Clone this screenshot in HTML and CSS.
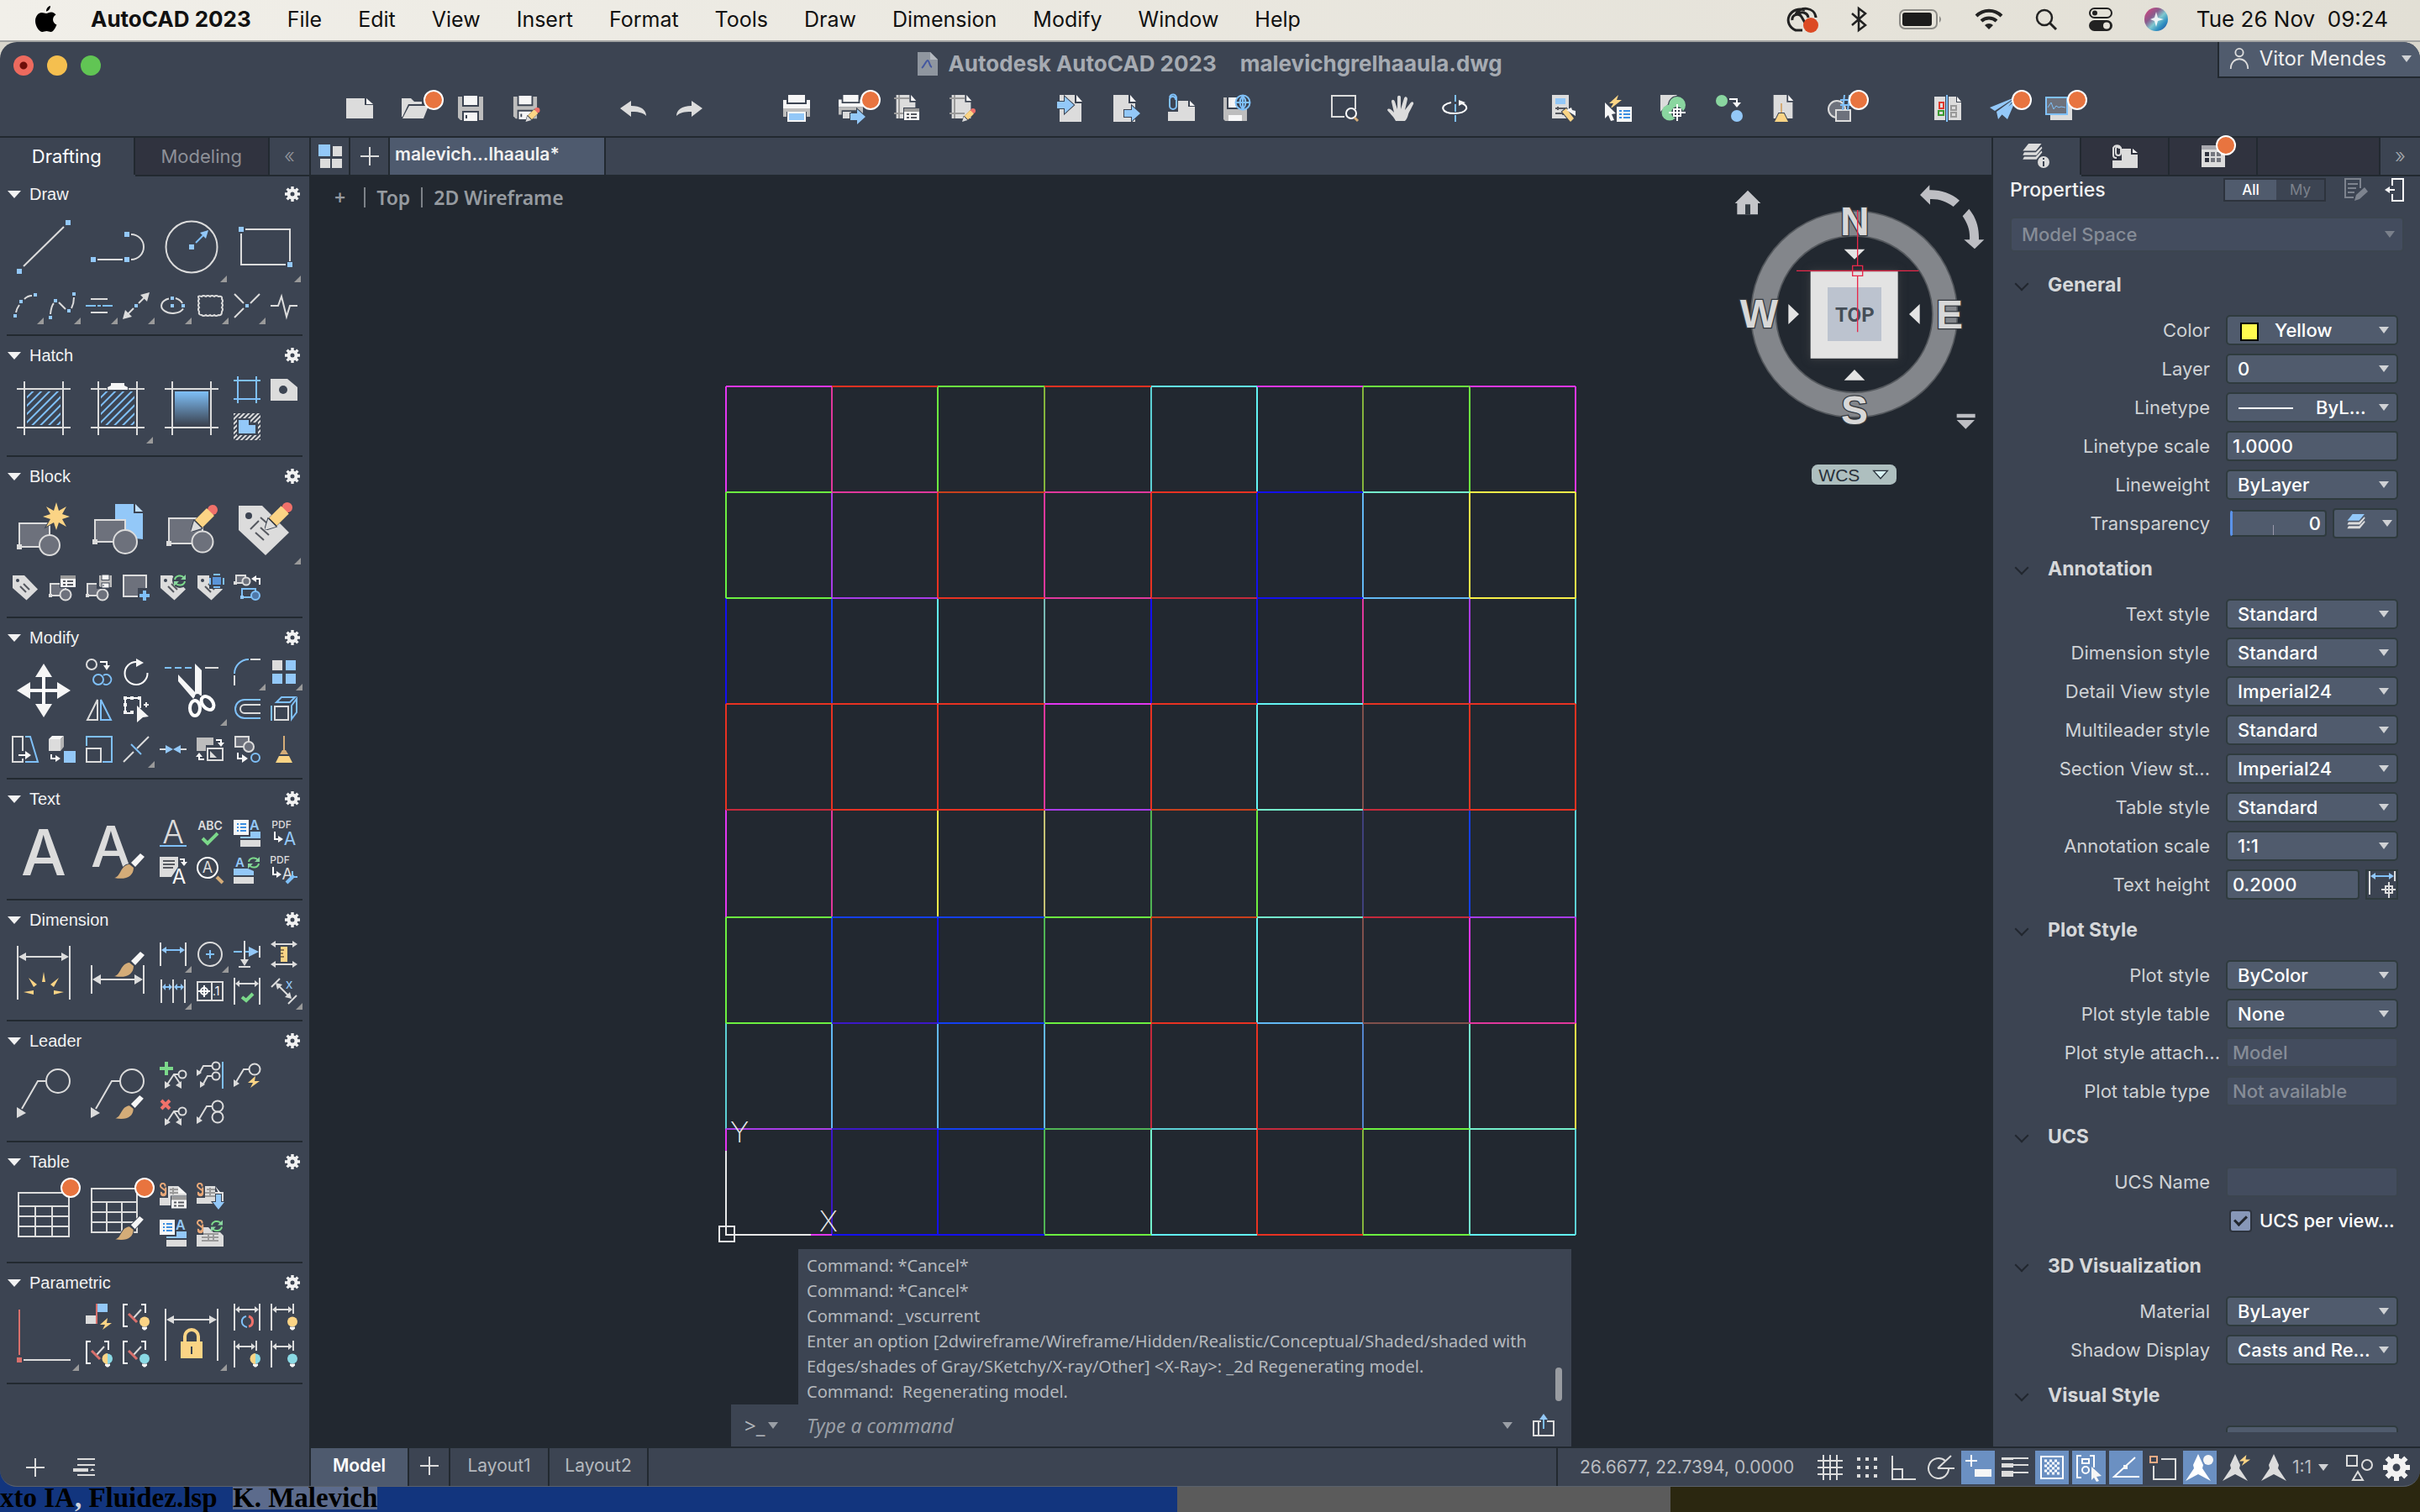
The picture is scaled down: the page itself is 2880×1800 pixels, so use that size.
FILE: index.html
```html
<!DOCTYPE html>
<html lang="en">
<head>
<meta charset="utf-8">
<title>Autodesk AutoCAD 2023 - malevichgrelhaaula.dwg</title>
<link rel="stylesheet" href="styles.css">
</head>
<body>

<!-- Shared icon parts -->
<svg class="defs" aria-hidden="true">
  <defs>
    <pattern id="hatchBlue" width="7" height="7" patternUnits="userSpaceOnUse" patternTransform="rotate(45)"><path class="b" d="M1 0V7"/></pattern>
    <pattern id="hatchLight" width="4" height="4" patternUnits="userSpaceOnUse" patternTransform="rotate(45)"><path class="l" d="M1 0V4"/></pattern>
    <linearGradient id="fade" x1="0" y1="0" x2="0" y2="1"><stop offset="0" stop-color="#7fc0f8"/><stop offset="1" stop-color="#3c4452"/></linearGradient>
    <linearGradient id="siri" x1="0" y1="0" x2="1" y2="1"><stop offset="0" stop-color="#e0407c"/><stop offset=".35" stop-color="#8a5a8c"/><stop offset=".55" stop-color="#7fc8d0"/><stop offset=".75" stop-color="#2f8fc0"/><stop offset="1" stop-color="#2a3d9a"/></linearGradient>
  </defs>
  <symbol id="gear" viewBox="0 0 18 18"><circle cx="9" cy="9" r="4.5" fill="none" stroke="#f2f2f2" stroke-width="4"/><path stroke="#f2f2f2" stroke-width="3.4" d="M9 0v4M9 14v4M0 9h4M14 9h4M2.6 2.6l3 3M12.4 12.4l3 3M15.4 2.6l-3 3M5.6 12.4l-3 3"/></symbol>
  <symbol id="pencil" viewBox="0 0 32 32"><path class="out" d="M5 19 20 4l8 8L13 27z"/><circle class="rf" cx="26" cy="6" r="6"/><path class="yf" d="M5 18 19 4l9 9L14 27z"/><path class="lf out" d="M0 32 4 19l9 9z"/></symbol>
  <symbol id="brush" viewBox="0 0 36 32"><path class="out wf" d="M20 11 31 0l5 4-11 12z"/><path class="out tf" d="M0 29C8 28 7 14 18 13l5 4C23 27 14 32 0 29z"/></symbol>
  <symbol id="tag" viewBox="0 0 32 32"><path class="lf" d="M1 1h14l16 16.500-13.500 13L1 16z"/><circle class="pf" cx="7" cy="7" r="2"/><path class="d" d="M10 14l7 7M14 11l7 7"/></symbol>
  <symbol id="sblk" viewBox="0 0 32 32"><path class="l g" d="M2 11h18v14H2z"/><circle class="l g" cx="20" cy="24" r="6.500"/><path class="lf" d="M0 23h4v4H0z"/></symbol>
  <symbol id="prop" viewBox="0 0 20 16"><path class="out wf" d="M1 1h18v14H1z"/><path fill="#9a9a9a" d="M1 1h18v4H1z"/><path class="d" d="M4 8h3M4 12h3M9 8h7M9 12h7"/></symbol>
  <symbol id="spin" viewBox="0 0 16 14"><path class="gr" d="M2 6a6 5.500 0 0 1 11-2M14 8a6 5.500 0 0 1-11 2"/><path class="grf" d="M15 0v6H9zM1 14V8h6z"/></symbol>
  <symbol id="bulb" viewBox="0 0 12 16"><circle cx="6" cy="6" r="6"/><path class="wf" d="M3 12h6v2l-2 2H5l-2-2z"/></symbol>
  <symbol id="bolt" viewBox="0 0 16 14"><path class="yf" d="M10 0 1 8h6l-3 6 11-8H9z"/></symbol>
  <symbol id="clip" viewBox="0 0 10 18"><path fill="none" stroke="#e8a878" stroke-width="2.200" d="M7 4a3 3 0 1 0-5 1l5 4a3 3 0 1 1-5 2M2 13a3 3 0 0 0 6 0V5"/></symbol>
  <symbol id="page" viewBox="0 0 32 32"><path class="lf" d="M3 0h18v10h8v22H3z"/><path class="wf" d="M23 0l7 8h-7z"/></symbol>
  <symbol id="floppy" viewBox="0 0 32 32"><path fill="#bdbdbd" d="M1 2h30v28H4l-3-3z"/><path class="pf" d="M6 0h20v14H6z"/><path class="wf" d="M8 1h16v11H8z"/><path class="pf" d="M6 19h20v12H6z"/><path class="wf" d="M8 21h16v10H8z"/><path class="pf" d="M10 24h2v4h-2z"/></symbol>
  <symbol id="printer" viewBox="0 0 32 32"><path class="wf" d="M6 0h20v9H6zM0 6h4v5h24V6h4v10H0z"/><path fill="#bdbdbd" d="M0 16h32v10h-4v-6H4v6H0z"/></symbol>
  <symbol id="person" viewBox="0 0 24 28"><circle class="l" cx="12" cy="6" r="5"/><path class="l" d="M1 27C1 10 23 10 23 27"/></symbol>
  <symbol id="stack" viewBox="0 0 32 28"><path class="top" d="M8 0h18l-8 10H0z"/><path class="lf" d="M2 12h16l8-8 1 2-8 10H0zM2 18h16l8-8 1 2-8 10H0z"/></symbol>
  <symbol id="alink" viewBox="0 0 32 32"><path class="wf" d="M0 0h18v18H0z"/><path stroke="#3c8ee0" stroke-width="2" d="M4 5h2M4 9h2M4 13h2M8 5h7M8 9h7M8 13h7"/><text class="bf" x="19" y="12" font-size="16" font-weight="600">A</text><path class="bf" d="M20 14h12v8H8v-2h12z"/><path class="lf" d="M8 24h24v8H8z"/></symbol>
  <symbol id="compass" viewBox="0 0 32 32"><path class="lf" d="M16 0l6 13-1 4 10 15-15-8-15 8 10-15-1-4z"/></symbol>
</svg>

<header class="menubar">
  <svg class="apple" width="26" height="32" viewBox="0 0 26 32"><path d="M18 0c0 3-2 6-5 6.500 0-3 2-6 5-6.500zM13 9c2 0 3-1.500 6-1.500 2.500 0 4.500 1.500 5.500 3-5 3-4.500 9.500 1 12C24 26 21.500 31 18.500 31c-2 0-3-1-5-1s-3.500 1-5 1C4.500 31 0 24 0 18c0-6 4-10 7.500-10 2.500 0 4 1 5.500 1z"/></svg>
  <nav class="menus">
    <button class="app">AutoCAD 2023</button><button>File</button><button>Edit</button><button>View</button><button>Insert</button><button>Format</button><button>Tools</button><button>Draw</button><button>Dimension</button><button>Modify</button><button>Window</button><button>Help</button>
  </nav>
  <div class="tray">
    <svg width="40" height="32" viewBox="0 0 40 32"><path fill="none" stroke="#222" stroke-width="3" d="M24 5a11 10 0 1 0-11 24h8M16 10a7 7 0 0 1 12 4M9 17a6 6 0 0 1 11-4l4 7M13 10C18 0 36 1 37 14"/><circle cx="31" cy="23" r="9" fill="#dc4a24"/></svg>
    <svg width="20" height="28" viewBox="0 0 20 28"><path fill="none" stroke="#222" stroke-width="2.500" d="M2 7l16 14-8 6V1l8 6L2 21"/></svg>
    <svg width="52" height="24" viewBox="0 0 52 24"><rect x="1" y="1" width="44" height="22" rx="6" fill="none" stroke="#8b8a86" stroke-width="2"/><rect x="4" y="4" width="35" height="16" rx="3" fill="#1c1c1c"/><path fill="#8b8a86" d="M48 8q4 4 0 8z"/></svg>
    <svg width="34" height="26" viewBox="0 0 34 26"><path fill="none" stroke="#222" stroke-width="4" d="M2 9a21 21 0 0 1 30 0M8 15a13 13 0 0 1 18 0"/><path fill="#222" d="M17 25l-5-5a7 7 0 0 1 10 0z"/></svg>
    <svg width="26" height="26" viewBox="0 0 26 26"><circle cx="11" cy="11" r="9" fill="none" stroke="#222" stroke-width="2.500"/><path stroke="#222" stroke-width="3" d="M17 17l8 8"/></svg>
    <svg width="28" height="28" viewBox="0 0 28 28"><rect x="1" y="1" width="26" height="11" rx="5.500" fill="none" stroke="#222" stroke-width="2"/><circle cx="7" cy="6.500" r="3" fill="#222"/><rect y="15" width="28" height="13" rx="6.500" fill="#222"/><circle cx="21" cy="21.500" r="4" fill="#e6e3da"/></svg>
    <svg width="28" height="28" viewBox="0 0 28 28"><circle cx="14" cy="14" r="14" fill="url(#siri)"/><path fill="#fff" opacity=".85" d="M14 5l2 7 7 2-7 2-2 7-2-7-5-2 5-2z"/></svg>
    <time>Tue 26 Nov&nbsp; 09:24</time>
  </div>
</header>

<main class="window">
  <header class="titlebar">
    <div class="title-row">
      <div class="lights"><i class="close"></i><i class="mini"></i><i class="zoom"></i></div>
      <h1><svg width="24" height="28" viewBox="0 0 24 28"><path fill="#8f969f" d="M0 0h15l9 9v19H0z"/><path fill="#b4b9c0" d="M15 0l9 9h-9z"/><path fill="none" stroke="#4458a0" stroke-width="2" d="M5 19c3-2 5-9 7-9s2 7 5 8"/></svg><span>Autodesk AutoCAD 2023</span><span>malevichgrelhaaula.dwg</span></h1>
      <button class="user"><svg width="24" height="26"><use href="#person"/></svg>Vitor Mendes<i class="caret"></i></button>
    </div>
    <div class="toolbar">
      <div class="group">
        <button aria-label="New"><svg viewBox="0 0 32 32"><path class="lf" d="M0 4h22v8h10v16H0z"/><path class="wf" d="M24 4l8 7h-8z"/></svg></button>
        <button aria-label="Open" class="new"><svg viewBox="0 0 32 32"><path class="lf" d="M0 4h11l4 4h9v3H8L1 26H0z"/><path class="lf" d="M9 13h23l-6 15H1z"/></svg></button>
        <button aria-label="Save"><svg><use href="#floppy"/></svg></button>
        <button aria-label="Save As"><svg viewBox="0 0 32 32"><use href="#floppy" width="30" height="30"/><use href="#pencil" x="15" y="15" width="18" height="17"/></svg></button>
      </div>
      <div class="group">
        <button aria-label="Undo"><svg viewBox="0 0 32 32"><path class="lf" d="M0 16l13-9v6c12 0 18 5 18 12-4-4-9-5-18-5v6z"/></svg></button>
        <button aria-label="Redo"><svg viewBox="0 0 32 32"><path class="lf" d="M32 16L19 7v6C7 13 1 18 1 25c4-4 9-5 18-5v6z"/></svg></button>
      </div>
      <div class="group">
        <button aria-label="Print"><svg viewBox="0 0 32 32"><use href="#printer"/><path class="wf" d="M5 20h22v12H5z"/><path class="bf" d="M7 22h18v8H7z"/></svg></button>
        <button aria-label="Batch publish" class="new"><svg viewBox="0 0 32 32"><use href="#printer" width="29" height="29"/><path class="lf" d="M5 20h10v8H5z"/><path class="bf out" d="M14 22h8v-5l10 9-10 9v-5h-8z"/></svg></button>
        <button aria-label="Page setup"><svg viewBox="0 0 32 32"><use href="#page" width="28" height="28"/><path class="m" d="M0 4h18M6 0v28M0 22h14"/><use href="#prop" x="11" y="14" width="20" height="18"/></svg></button>
        <button aria-label="Plot styles"><svg viewBox="0 0 32 32"><use href="#page" width="28" height="28"/><path class="m" d="M0 4h18M6 0v28M0 22h18"/><use href="#pencil" x="14" y="16" width="18" height="16"/></svg></button>
      </div>
      <div class="group">
        <button aria-label="Import"><svg viewBox="0 0 32 32"><use href="#page"/><path class="bf out" d="M0 8h9V2l11 10-11 10v-6H0z"/></svg></button>
        <button aria-label="Export"><svg viewBox="0 0 32 32"><use href="#page" x="-2"/><path class="bf out" d="M14 18h9v-5l10 9-10 9v-5h-9z"/></svg></button>
        <button aria-label="Attach"><svg viewBox="0 0 32 32"><path class="lf" d="M0 20h12V7h12v7h8v17H0z"/><path class="wf" d="M26 7l6 6h-6z"/><path class="b" d="M9 6a3.500 3.500 0 0 0-7-1v8a4 4 0 0 0 8 0V4a4 4 0 0 0-8-1"/></svg></button>
        <button aria-label="Save to web"><svg viewBox="0 0 32 32"><path fill="#bdbdbd" d="M0 3h4v14h24v14H2l-2-2z"/><path class="wf" d="M6 3h10v12H6zM6 24h16v7H6z"/><circle class="b pbg" cx="23" cy="9" r="8.500"/><path class="b" d="M23 1v16M15 9h16M23 1q-7 8 0 16M23 1q7 8 0 16"/></svg></button>
      </div>
      <div class="group">
        <button aria-label="Zoom window"><svg viewBox="0 0 32 32"><path class="l" d="M16 26H1V1h28v16"/><circle class="w" cx="24" cy="22" r="6"/><path stroke="#d4ac78" stroke-width="3" d="M28 27l4 4"/></svg></button>
        <button aria-label="Pan"><svg viewBox="0 0 32 32"><path class="lf" d="M11 31C8 25 3 21 1 18c1-3 5-1 8 3L6 8c0-3 3-3 4 0l3 9V3c0-3 4-3 4 0v14l4-13c1-3 4-2 4 1l-3 13 7-9c2-2 4 0 3 2-3 6-5 9-6 12-1 4-2 6-4 8z"/></svg></button>
        <button aria-label="Orbit"><svg viewBox="0 0 32 32"><path class="b" d="M16 0v8M16 24v8M16 11v9"/><path class="w" stroke-width="3" d="M11 9c-15 3-12 13 4 13 14 0 19-8 9-12"/><path class="wf" d="M20 13V6l8 3z"/></svg></button>
      </div>
      <div class="group">
        <button aria-label="Tool settings"><svg viewBox="0 0 32 32"><path class="lf" d="M3 0h20v28H3z"/><path class="bf" d="M7 4h12v7H7z"/><path class="d" d="M7 16h12M7 22h12M10 14v4M16 20v4"/><path class="yf out" d="M15 20l5-4 9 12-4 4z"/><path class="wf" d="M20 18l6-3 1 3 4 1v6z"/></svg></button>
        <button aria-label="Quick select"><svg viewBox="0 0 32 32"><path class="yf" d="M16 0L5 10h5L6 17l14-11h-6z"/><path class="wf out" d="M0 9l13 13-5 1 3 7-4 1-3-7-4 4z"/><path class="wf" d="M14 14h18v18H14z"/><path stroke="#3c8ee0" stroke-width="2" d="M17 19h3M17 23h3M17 27h3M22 19h8M22 23h8M22 27h8"/></svg></button>
        <button aria-label="Geolocation"><svg viewBox="0 0 32 32"><path class="lf" d="M0 0h20L0 20z"/><circle class="grf out" cx="20" cy="12" r="10"/><circle class="grf" cx="11" cy="21" r="9.500"/><circle class="pf" cx="20" cy="21" r="7"/><path class="w" d="M20 11v20M10 21h20M16 17h8v8h-8z"/></svg></button>
        <button aria-label="Match"><svg viewBox="0 0 32 32"><circle class="grf" cx="7" cy="7" r="7"/><circle class="bf" cx="25" cy="25" r="7"/><path class="w" d="M16 5h9v6"/><path class="wf" d="M20 9h10l-5 6z"/></svg></button>
        <button aria-label="Purge"><svg viewBox="0 0 32 32"><use href="#page" width="28" height="28"/><path stroke="#d4ac78" stroke-width="2" d="M12 10v12"/><path class="yf out" d="M9 22h6l5 10H4z"/></svg></button>
        <button aria-label="Count" class="new"><svg viewBox="0 0 32 32"><circle class="l g" cx="12" cy="17" r="10"/><path class="l g" d="M11 18h17v13H11z"/><path class="b" d="M21 0l-2 18M27 0l-2 18M16 6h14M16 12h14"/></svg></button>
      </div>
      <div class="group">
        <button aria-label="Compare"><svg viewBox="0 0 32 32"><path class="lf" d="M0 2h13v28H0zM17 2h9v7h6v21H17z"/><path class="wf" d="M27 2l5 6h-5z"/><path class="b" d="M15 0v32"/><path fill="none" stroke="#e03a2e" stroke-width="2" d="M6 9h5v7H6z"/><path fill="none" stroke="#3b9a32" stroke-width="2" d="M5 19h6v5H5z"/><path class="m" d="M20 13h6v5h-6zM20 21h6v5h-6z"/></svg></button>
        <button aria-label="Share" class="new"><svg viewBox="0 0 32 32"><path class="bf" d="M32 2L0 15l6 4zM30 4L8 20l2 9zM31 6L13 22l8 7z"/></svg></button>
        <button aria-label="Insights" class="new"><svg viewBox="0 0 32 32"><path class="lf" d="M6 6h26v24H6z"/><path class="b g" d="M1 3h25v20H1z"/><path class="b thin" d="M3 15l4-6 3 8 3-4 3 2 3-1 5 1"/></svg></button>
      </div>
    </div>
  </header>

  <div class="workspace">
    <aside class="palette">
      <nav class="tabs"><button class="active">Drafting</button><button>Modeling</button><button class="fold">«</button></nav>

      <section>
        <h2><i></i>Draw<svg><use href="#gear"/></svg></h2>
        <div class="tools">
          <button class="big" aria-label="Line"><svg viewBox="0 0 64 64"><path class="l" d="M8 55L56 8"/><path class="bf" d="M0 58h6v6H0zM58 0h6v6h-6z"/></svg></button>
          <button class="big" aria-label="Polyline"><svg viewBox="0 0 64 64"><path class="l" d="M8 47h30M48 17a15 15 0 0 1 0 30"/><path class="bf" d="M0 44h6v6H0zM40 44h6v6h-6zM40 14h6v6h-6z"/></svg></button>
          <button class="big fly" aria-label="Circle"><svg viewBox="0 0 64 64"><circle class="l" cx="32" cy="32" r="30.500"/><path class="b" d="M37 27l10-10"/><path class="bf" d="M29 29h6v6h-6zM52 12l-3 10-7-7z"/></svg></button>
          <button class="big fly" aria-label="Rectangle"><svg viewBox="0 0 64 64"><path class="l" d="M8 11h53v38M56 53H3V16"/><path class="bf" d="M0 8h6v6H0zM58 50h6v6h-6z"/></svg></button>
          <button class="low fly" aria-label="Arc"><svg viewBox="0 0 32 32"><path class="l" d="M5 24q1-5 4-9M15 8q4-4 9-4"/><path class="bf" d="M2 26h4v4H2zM9 9h4v4H9zM26 1h4v4h-4z"/></svg></button>
          <button class="low fly" aria-label="Spline"><svg viewBox="0 0 32 32"><path class="l" d="M2 26q1-10 4-13M12 12l8 8M27 19q3-6 3-13"/><path class="bf" d="M0 28h4v4H0zM6 8h4v4H6zM22 20h4v4h-4zM28 0h4v4h-4z"/></svg></button>
          <button class="low fly" aria-label="Multiline"><svg viewBox="0 0 32 32"><path class="l" d="M6 8h20M6 24h20"/><path class="b" d="M0 16h12M14 16h4M20 16h12"/></svg></button>
          <button class="low fly" aria-label="Construction line"><svg viewBox="0 0 32 32"><path class="l" d="M5 27l8-8M19 13l8-8"/><path class="lf" d="M32 0l-3 11-8-8zM0 32l3-11 8 8z"/><path class="bf" d="M14 14h4v4h-4z"/></svg></button>
          <button class="low fly" aria-label="Ellipse"><svg viewBox="0 0 32 32"><path class="l" d="M11 7.500a13.500 9 0 1 0 17 12M19 7q6 2 8 6"/><path class="bf" d="M13 5h4v4h-4zM13 14h4v4h-4zM26 14h4v4h-4z"/></svg></button>
          <button class="low fly" aria-label="Revision cloud"><svg viewBox="0 0 32 32"><path class="l" d="M3 8q-3-5 3-3 2-2 5 0 2-2 5 0 2-2 5 0 2-2 5 0 5-1 4 3 2 2 0 5 2 2 0 5 2 2 0 5 0 5-4 4-3 2-5 0-3 2-5 0-3 2-5 0-3 2-5 0-4 0-3-4-2-3 0-5-2-3 0-5-2-3 0-5z"/></svg></button>
          <button class="low fly" aria-label="Point"><svg viewBox="0 0 32 32"><path class="l" d="M1 2l11 11M31 2L20 13M12 19L1 30"/><path class="bf" d="M14 14h4v4h-4z"/></svg></button>
          <button class="low" aria-label="Break line"><svg viewBox="0 0 32 32"><path class="l" d="M0 16h9l4-11 6 24 4-13h9"/></svg></button>
        </div>
      </section>

      <section>
        <h2><i></i>Hatch<svg><use href="#gear"/></svg></h2>
        <div class="tools">
          <button class="big" aria-label="Hatch"><svg viewBox="0 0 64 64"><path class="l" d="M0 9h64M0 55h64M9 0v64M55 0v64"/><path fill="url(#hatchBlue)" d="M12 12h40v40H12z"/></svg></button>
          <button class="big fly" aria-label="Edit hatch"><svg viewBox="0 0 64 64"><path class="l" d="M0 9h64M0 55h64M9 0v64M55 0v64"/><path fill="url(#hatchBlue)" d="M12 12h40v40H12z"/><path class="wf out" d="M24 2h16v3l4 2v3H20V7l4-2z"/></svg></button>
          <button class="big" aria-label="Gradient"><svg viewBox="0 0 64 64"><path class="l" d="M0 9h64M0 55h64M9 0v64M55 0v64"/><path fill="url(#fade)" d="M12 12h40v40H12z"/></svg></button>
          <button aria-label="Boundary"><svg viewBox="0 0 32 32"><path class="b" d="M0 5h32M0 27h32M5 0v32M27 0v32"/></svg></button>
          <button aria-label="Wipeout"><svg viewBox="0 0 32 32"><path class="lf" d="M0 3h20l12 10v16H0z"/><circle class="pf" cx="15" cy="16" r="5"/></svg></button>
          <button aria-label="Region"><svg viewBox="0 0 32 32"><path fill="url(#hatchLight)" d="M0 0h32v32H0z"/><path class="pf" d="M4 6h16v5h9v15H4z"/><path class="bf" d="M6 8h12v6h8v10H6z"/></svg></button>
        </div>
      </section>

      <section>
        <h2><i></i>Block<svg><use href="#gear"/></svg></h2>
        <div class="tools">
          <button class="big" aria-label="Create block"><svg viewBox="0 0 64 64"><path class="l g" d="M3 25h36v28H3z"/><circle class="l g" cx="39" cy="51" r="12"/><path class="lf" d="M0 50h6v6H0z"/><path class="yf out" d="M47 0l3 10 9-5-5 9 9 3-9 3 5 9-9-5-3 9-3-9-9 5 5-9-9-3 9-3-5-9 9 5z"/></svg></button>
          <button class="big" aria-label="Insert block"><svg viewBox="0 0 64 64"><path class="bf" d="M29 2h22v11h11v31L29 40z"/><path fill="#c3e0fa" d="M53 2l9 9h-9z"/><path class="l g" d="M5 21h36v26H5z"/><circle class="l g" cx="41" cy="47" r="14"/><path class="lf" d="M2 44h6v6H2z"/></svg></button>
          <button class="big" aria-label="Edit block"><svg viewBox="0 0 64 64"><path class="l g" d="M5 19h40v30H5z"/><circle class="l g" cx="45" cy="47" r="12.500"/><path class="lf" d="M2 46h6v6H2z"/><use href="#pencil" x="31" y="3" width="32" height="32"/></svg></button>
          <button class="big fly" aria-label="Edit attributes"><svg viewBox="0 0 64 64"><path class="lf" d="M0 4h28l32 32-28 27L0 33z"/><circle class="pf" cx="12" cy="16" r="4"/><path class="d" d="M14 32l10-10M20 36l10 9M26 30l10 9M26 18l8 7"/><use href="#pencil" x="31" y="0" width="33" height="33"/></svg></button>
          <button class="low" aria-label="Define attributes"><svg><use href="#tag"/></svg></button>
          <button class="low" aria-label="Manage attributes"><svg viewBox="0 0 32 32"><use href="#sblk"/><use href="#prop" x="13" y="0" width="20" height="16"/></svg></button>
          <button class="low" aria-label="Write block"><svg viewBox="0 0 32 32"><use href="#sblk"/><path class="pf" d="M13 0h19v17H13z"/><use href="#floppy" x="15" y="0" width="17" height="16"/></svg></button>
          <button class="low" aria-label="Base point"><svg viewBox="0 0 32 32"><path class="l g" d="M1 1h27v25H1z"/><path class="pf" d="M18 16h14v16H18z"/><path stroke="#7fc0f8" stroke-width="4" d="M26 19v12M20 25h12"/></svg></button>
          <button class="low" aria-label="Synchronize"><svg viewBox="0 0 32 32"><use href="#tag"/><circle class="pf" cx="24" cy="7" r="9"/><use href="#spin" x="16" y="0" width="16" height="14"/></svg></button>
          <button class="low" aria-label="Retain display"><svg viewBox="0 0 32 32"><use href="#tag"/><path class="pf" d="M15 0h17v17H15z"/><path fill="#5a94d8" d="M19 3h10v9H19z"/><path class="b" d="M16 4v8M32 4v8M20 0h8M20 15h8"/></svg></button>
          <button class="low" aria-label="Replace block"><svg viewBox="0 0 32 32"><path class="l g" d="M3 1h11v9H3z"/><circle class="l g" cx="15" cy="8" r="4.500"/><path class="lf" d="M0 8h4v4H0z"/><path class="b" fill-opacity="0" d="M10 17h16v10H10z"/><circle cx="26" cy="25" r="5" fill="#4f78a8" stroke="#7fc0f8" stroke-width="2"/><path class="bf" d="M8 25h4v4H8z"/><path class="w" d="M31 12V5h-6"/><path class="wf" d="M21 5l6-4v8z"/></svg></button>
        </div>
      </section>

      <section>
        <h2><i></i>Modify<svg><use href="#gear"/></svg></h2>
        <div class="tools">
          <button class="big" aria-label="Move"><svg viewBox="0 0 64 64"><path stroke="#fff" stroke-width="4" d="M32 10v44M10 32h44"/><path class="wf" d="M32 0l10 16H22zM32 64l10-16H22zM0 32l16-10v20zM64 32L48 22v20z"/></svg></button>
          <button aria-label="Copy"><svg viewBox="0 0 32 32"><circle class="l" cx="7" cy="7" r="6"/><circle class="b" cx="15" cy="25" r="6"/><path class="b" d="M21 20a6 6 0 1 1 0 10"/><path class="w" d="M17 4h8v6"/><path class="wf" d="M21 8h8l-4 6z"/></svg></button>
          <button aria-label="Rotate"><svg viewBox="0 0 32 32"><path class="w" d="M16 4a13.500 13.500 0 1 0 13.500 13"/><path class="wf" d="M16 0l9 5-9 5z"/></svg></button>
          <button class="big mid fly" aria-label="Trim"><svg viewBox="0 0 64 64"><path class="b" d="M0 5h8M12 5h8M24 5h8"/><path class="l" d="M48 5h16"/><path class="wf" d="M36 0l8 8v30h-8zM16 13l22 23-4 6-18-21z"/><ellipse cx="36" cy="53" rx="6" ry="9" fill="none" stroke="#fff" stroke-width="4"/><ellipse cx="51" cy="47" rx="6" ry="9" transform="rotate(-40 51 47)" fill="none" stroke="#fff" stroke-width="4"/><circle class="pf" cx="39" cy="39" r="3"/></svg></button>
          <button class="fly" aria-label="Fillet"><svg viewBox="0 0 32 32"><path class="l" d="M1 20v12M20 1h12"/><path class="b" d="M1 18A17 17 0 0 1 18 1"/></svg></button>
          <button class="fly" aria-label="Array"><svg viewBox="0 0 32 32"><path class="lf" d="M2 2h12v12H2z"/><path class="bf" d="M18 2h12v12H18zM2 18h12v12H2zM18 18h12v12H18z"/></svg></button>
          <button aria-label="Mirror"><svg viewBox="0 0 32 32"><path class="l" d="M14 5v24H2z"/><path class="b" d="M18 5v24h12z"/></svg></button>
          <button aria-label="Select similar"><svg viewBox="0 0 32 32"><path class="w" d="M3 3h18v12M3 3v18h10"/><path class="wf" d="M1 1h4v4H1zM9 1h4v4H9zM18 1h4v4h-4zM1 9h4v4H1zM1 18h4v4H1zM9 18h4v4H9zM17 12l14 13-7 1-7 6zM27 8h2v6h-2zM25 10h6v2h-6z"/></svg></button>
          <button aria-label="Offset"><svg viewBox="0 0 32 32"><path class="b" d="M32 5H13a11 11 0 0 0 0 22h19"/><path class="l" d="M32 11H13a5 5 0 0 0 0 10h19"/></svg></button>
          <button aria-label="Presspull"><svg viewBox="0 0 32 32"><path class="l" stroke-width="3" d="M5 13h16v16H5z"/><path class="b" d="M1 12v18M7 8l6-6h16l-6 6zM25 28V12l6-8v16z"/></svg></button>
          <button class="low" aria-label="Stretch"><svg viewBox="0 0 32 32"><path class="l" d="M13 18V1H1v30h12v-4"/><path class="b" d="M16 1h6l9 30H16"/><path class="w" d="M8 23h10"/><path class="wf" d="M16 18l7 5-7 5z"/></svg></button>
          <button class="low" aria-label="Change space"><svg viewBox="0 0 32 32"><path class="lf" d="M0 4h14v14H0z"/><path class="wf" d="M0 4l4-4h14l-4 4z"/><path fill="#b4b4b4" d="M14 4l4-4v13l-4 5z"/><path class="bf" d="M18 18h14v14H18z"/><path class="w" d="M3 22v5h6"/><path class="wf" d="M8 23l6 4-6 4z"/></svg></button>
          <button class="low" aria-label="Scale"><svg viewBox="0 0 32 32"><path class="b" d="M1 12V1h30v30H20"/><path class="l" d="M1 15h17v16H1z"/></svg></button>
          <button class="low fly" aria-label="Break"><svg viewBox="0 0 32 32"><path class="l" d="M1 31l12-12M17 15L31 1"/><path class="b" stroke-width="3" d="M10 10l12 12"/></svg></button>
          <button class="low" aria-label="Join"><svg viewBox="0 0 32 32"><path class="l" d="M0 16h8M24 16h8"/><path class="bf" d="M7 11l9 5-9 5zM25 11l-9 5 9 5z"/></svg></button>
          <button class="low" aria-label="Draw order"><svg viewBox="0 0 32 32"><path fill="#bdbdbd" d="M0 2h20v9h-9v7H0z"/><path class="l" d="M13 15h18v14H13z"/><path class="lf" d="M16 18v8h8z"/><path class="w" d="M23 5h6v4M3 23v5h6"/><path class="wf" d="M25 8h8l-4 5zM-1 25h8l-4-5z"/></svg></button>
          <button class="low" aria-label="Explode"><svg viewBox="0 0 32 32"><path class="l g" d="M2 1h16v12H2z"/><circle class="l g" cx="18" cy="13" r="6"/><circle class="b" cx="26" cy="26" r="5"/><path class="w" d="M5 20v7h6"/><path class="wf" d="M10 22l7 5-7 5z"/></svg></button>
          <button class="low" aria-label="Cleanup"><svg viewBox="0 0 32 32"><path stroke="#d4ac78" stroke-width="2" d="M16 0v20"/><path class="tf" d="M14 17h4l3 5H11z"/><path class="yf" d="M10 24h12l4 8H6z"/></svg></button>
        </div>
      </section>

      <section>
        <h2><i></i>Text<svg><use href="#gear"/></svg></h2>
        <div class="tools">
          <button class="big" aria-label="Multiline text"><svg viewBox="0 0 64 64"><text class="lf" x="32" y="60" font-size="76" font-weight="500" text-anchor="middle">A</text></svg></button>
          <button class="big" aria-label="Text style"><svg viewBox="0 0 64 64"><text class="lf" x="24" y="50" font-size="68" font-weight="500" text-anchor="middle">A</text><use href="#brush" x="28" y="34" width="36" height="32"/></svg></button>
          <button aria-label="Single line text"><svg viewBox="0 0 32 32"><text class="lf" x="16" y="28" font-size="38" font-weight="300" text-anchor="middle">A</text><path class="b" d="M0 31h32"/></svg></button>
          <button aria-label="Spelling"><svg viewBox="0 0 32 32"><text class="lf" x="16" y="12" font-size="14" font-weight="600" text-anchor="middle">ABC</text><path fill="none" stroke="#7bd88a" stroke-width="4" d="M7 22l6 6 12-12"/></svg></button>
          <button aria-label="Insert field"><svg><use href="#alink"/></svg></button>
          <button aria-label="PDF text"><svg viewBox="0 0 32 32"><text class="lf" x="13" y="10" font-size="12" font-weight="500" text-anchor="middle">PDF</text><path class="w" d="M5 14v9h6"/><path class="wf" d="M9 19l6 4-6 4z"/><text class="bf" x="23" y="30" font-size="21" text-anchor="middle">A</text></svg></button>
          <button aria-label="Text from file"><svg viewBox="0 0 32 32"><path class="lf" d="M0 0h22v12l-8 12H0z"/><path class="d" d="M4 5h14M4 9h14M4 13h12"/><text class="wf" x="23" y="32" font-size="24" text-anchor="middle">A</text><path class="w" d="M24 3h5v4"/><path class="wf" d="M25 6h8l-4 5z"/></svg></button>
          <button aria-label="Find text"><svg viewBox="0 0 32 32"><circle class="w" cx="13" cy="13" r="12"/><text class="lf" x="13" y="19" font-size="18" text-anchor="middle">A</text><path stroke="#d4ac78" stroke-width="4" d="M24 24l7 7"/></svg></button>
          <button aria-label="Update fields"><svg viewBox="0 0 32 32"><text class="bf" x="2" y="12" font-size="15" font-weight="600">A</text><path class="bf" d="M0 14h17l7 3v5H0z"/><path class="lf" d="M0 24h24v8H0z"/><use href="#spin" x="16" y="0" width="16" height="14"/></svg></button>
          <button aria-label="PDF recognition"><svg viewBox="0 0 32 32"><text class="lf" x="11" y="8" font-size="12" font-weight="500" text-anchor="middle">PDF</text><path class="w" d="M3 12v9h6"/><path class="wf" d="M7 17l6 4-6 4z"/><text class="lf" x="20" y="27" font-size="19" text-anchor="middle">A</text><path stroke="#7fc0f8" stroke-width="4" d="M19 31l8-8"/><path class="b" stroke-width="3" d="M26 17v5l2 2h4"/></svg></button>
        </div>
      </section>

      <section>
        <h2><i></i>Dimension<svg><use href="#gear"/></svg></h2>
        <div class="tools">
          <button class="big" aria-label="Dimension"><svg viewBox="0 0 64 64"><path class="l" d="M1 0v64M63 0v64M8 13h48"/><path class="lf" d="M2 13l9-5v10zM62 13l-9-5v10z"/><path class="yf" d="M30 43l2-12 2 12zM20 49l-6-11 10 8zM44 49l6-11-10 8zM20 53L8 55l12 3zM44 53l12 2-12 3z"/></svg></button>
          <button class="big" aria-label="Dimension style"><svg viewBox="0 0 64 64"><path class="l" d="M1 23v34M63 23v34M8 40h48"/><path class="lf" d="M2 40l10-6v12zM62 40l-10-6v12z"/><use href="#brush" x="28" y="7" width="36" height="32"/></svg></button>
          <button class="fly" aria-label="Linear"><svg viewBox="0 0 32 32"><path class="l" d="M1 2v28M31 2v28"/><path class="b" d="M6 11h20"/><path class="bf" d="M2 11l6-4v8zM30 11l-6-4v8z"/></svg></button>
          <button class="fly" aria-label="Center mark"><svg viewBox="0 0 32 32"><circle class="l" cx="16" cy="16" r="14"/><path class="b" d="M16 11v10M11 16h10"/></svg></button>
          <button aria-label="Ordinate"><svg viewBox="0 0 32 32"><path class="b" d="M0 13h10M14 13h6"/><path class="l" d="M13 0v24M6 31h14M31 6v14"/><path class="bf" d="M18 7l12 6-12 6z"/><path class="lf" d="M8 22h10l-5 8z"/></svg></button>
          <button aria-label="Measure"><svg viewBox="0 0 32 32"><path class="l" d="M4 4h24M4 28h24"/><path class="lf" d="M0 4l6-4v8zM32 4l-6-4v8zM0 28l6-4v8zM32 28l-6-4v8z"/><path class="yf" d="M12 7h8v18h-8z"/><path stroke="#6b5a3c" stroke-width="1.500" d="M12 11h4M12 15h3M12 19h4"/></svg></button>
          <button class="fly" aria-label="Continue"><svg viewBox="0 0 32 32"><path class="l" d="M2 2v28M16 2v28M30 2v28"/><path class="b" d="M5 11h8M20 11h8"/><path class="bf" d="M3 11l4-4v8zM15 11l-4-4v8zM17 11l4-4v8zM29 11l-4-4v8z"/></svg></button>
          <button aria-label="Tolerance"><svg viewBox="0 0 32 32"><path class="l" d="M1 5h30v22H1zM18 5v22"/><circle class="w" cx="9" cy="16" r="4"/><path class="w" d="M9 9v14M2 16h14"/><text class="wf" x="19" y="21" font-size="14">.1</text></svg></button>
          <button aria-label="Inspect"><svg viewBox="0 0 32 32"><path class="l" d="M1 0v32M31 0v32M5 7h22"/><path class="lf" d="M2 7l5-4v8zM30 7l-5-4v8z"/><path fill="none" stroke="#7bd88a" stroke-width="4" d="M10 23l5 4 8-8"/></svg></button>
          <button class="fly" aria-label="Oblique"><svg viewBox="0 0 32 32"><path class="l" d="M1 11L11 1M21 31l10-10M9 9l13 13"/><path class="lf" d="M6 6l2 8 6-6zM25 25l-2-8-6 6z"/><text class="bf" x="22" y="13" font-size="16" text-anchor="middle">x</text></svg></button>
        </div>
      </section>

      <section>
        <h2><i></i>Leader<svg><use href="#gear"/></svg></h2>
        <div class="tools">
          <button class="big" aria-label="Multileader"><svg viewBox="0 5 64 64"><circle class="l" cx="49" cy="22" r="14"/><path class="l" d="M35 22H25L6 55"/><path class="lf" d="M0 66V53l11 7z"/></svg></button>
          <button class="big" aria-label="Leader style"><svg viewBox="0 5 64 64"><circle class="l" cx="49" cy="22" r="14"/><path class="l" d="M35 22H25L6 55"/><path class="lf" d="M0 66V53l11 7z"/><use href="#brush" x="28" y="39" width="36" height="30"/></svg></button>
          <button aria-label="Add leader"><svg viewBox="0 0 32 32"><path stroke="#7bd88a" stroke-width="4" d="M8 0v16M0 8h16"/><circle class="l" cx="27" cy="15" r="4.500"/><path class="l" d="M22 15h-5l-8 12M17 15l8 12"/><path class="lf" d="M6 32v-9l7 5zM26 32v-9l-7 5z"/></svg></button>
          <button aria-label="Align leaders"><svg viewBox="0 0 32 32"><path class="b" d="M31 0v32"/><circle class="l" cx="23" cy="5" r="4.500"/><circle class="l" cx="23" cy="17" r="4.500"/><path class="l" d="M18 5H8L3 14M18 17h-5L7 28"/><path class="lf" d="M0 17v-8l6 4zM4 31v-8l6 4z"/></svg></button>
          <button aria-label="Quick leader"><svg viewBox="0 0 32 32"><circle class="l" cx="25" cy="9" r="6.500"/><path class="l" d="M18 9h-6L3 24"/><path class="lf" d="M0 30v-9l7 5z"/><use href="#bolt" x="16" y="17" width="16" height="14"/></svg></button>
          <button class="rowstart" aria-label="Remove leader"><svg viewBox="0 0 32 32"><path stroke="#f0716a" stroke-width="4" d="M2 2l10 10M12 2L2 12"/><circle class="l" cx="27" cy="15" r="4.500"/><path class="l" d="M22 15h-5l-8 12M17 15l8 12"/><path class="lf" d="M6 32v-9l7 5zM26 32v-9l-7 5z"/></svg></button>
          <button aria-label="Collect leaders"><svg viewBox="0 0 32 32"><circle class="l" cx="25" cy="9" r="6.500"/><circle class="l" cx="25" cy="22" r="6.500"/><path class="l" d="M18 9h-6L3 24"/><path class="lf" d="M0 30v-9l7 5z"/></svg></button>
        </div>
      </section>

      <section>
        <h2><i></i>Table<svg><use href="#gear"/></svg></h2>
        <div class="tools">
          <button class="big new" aria-label="Table"><svg viewBox="0 4 64 64"><path class="l" d="M2 10h60v52H2zM2 26h60M2 38h60M2 50h60M22 26v36M42 26v36"/></svg></button>
          <button class="big new" aria-label="Table style"><svg viewBox="0 4 64 64"><path class="l" d="M1 5h54v52H1zM1 21h54M1 33h54M1 45h54M19 21v36M37 21v36"/><use href="#brush" x="28" y="38" width="36" height="30"/></svg></button>
          <button aria-label="Data link"><svg viewBox="0 0 32 32"><path class="lf" d="M0 18h10V4h12v9h10v14H0z"/><path class="wf" d="M22 4l10 9H22z"/><path class="m" d="M12 8h10M12 12h10M16 6v8"/><use href="#clip" width="9" height="18"/><use href="#prop" x="13" y="15" width="20" height="17"/></svg></button>
          <button aria-label="Download from source"><svg viewBox="0 0 32 32"><path class="lf" d="M0 18h10V4h12v7h10v14H0z"/><path class="wf" d="M22 4l10 12-6-4z"/><path class="m" d="M12 8h10M10 12h12M10 16h12M16 6v11"/><use href="#clip" width="9" height="18"/><path class="bf out" d="M23 14h6v9h4l-7 9-7-9h4z"/></svg></button>
          <button class="rowstart" aria-label="Table field"><svg><use href="#alink"/></svg></button>
          <button aria-label="Update links"><svg viewBox="0 0 32 32"><path class="lf" d="M0 18h8V9h6l6 6h8l4 4v13H0z"/><path class="m" d="M8 17h18M6 21h20M6 25h20M14 16v10M20 16v10"/><use href="#clip" width="9" height="18"/><use href="#spin" x="16" y="0" width="16" height="15"/></svg></button>
        </div>
      </section>

      <section>
        <h2><i></i>Parametric<svg><use href="#gear"/></svg></h2>
        <div class="tools">
          <button class="big fly" aria-label="Constraint"><svg viewBox="0 3 64 64"><path stroke="#d9706c" stroke-width="2" d="M3 4v54"/><path fill="#d9706c" d="M0 61h6v6H0z"/><path class="l" d="M8 64h56"/></svg></button>
          <button aria-label="Auto constrain"><svg viewBox="0 0 32 32"><path class="bf" d="M14 0h12v10H14z"/><path class="lf" d="M0 14h12v10H0z"/><path stroke="#d9706c" stroke-width="2" d="M13 0v24"/><use href="#bolt" x="16" y="17" width="16" height="14"/></svg></button>
          <button aria-label="Show constraints"><svg viewBox="0 0 32 32"><path class="w" d="M6 1H1v26h5M22 1h5v10"/><path class="l" d="M12 18l10-11"/><path stroke="#d9706c" stroke-width="3" d="M7 12l10 10"/><use href="#bulb" class="yf" x="20" y="15" width="12" height="17"/></svg></button>
          <button class="big mid fly" aria-label="Dimensional constraint"><svg viewBox="0 4 64 64"><path class="l" d="M1 4v62M63 4v62M8 17h48"/><path class="lf" d="M2 17l9-5v10zM62 17l-9-5v10z"/><path class="yf" d="M19 43h26v20H19z"/><path fill="none" stroke="#fbd485" stroke-width="4" d="M24 44v-7a8 8 0 0 1 16 0v7"/><path stroke="#3c4452" stroke-width="2" d="M32 49v9"/></svg></button>
          <button aria-label="Convert"><svg viewBox="0 0 32 32"><path class="l" d="M1 0v32M31 0v32M5 7h22"/><path class="lf" d="M2 7l5-4v8zM30 7l-5-4v8z"/><path class="b" stroke-width="3" d="M16 28c-8-2-8-11-1-13"/><path fill="none" stroke="#f0716a" stroke-width="3" d="M18 15c6 2 6 11 0 12"/></svg></button>
          <button aria-label="Show dynamic"><svg viewBox="0 0 32 32"><path class="l" d="M1 0v32M27 0v12M5 7h18"/><path class="lf" d="M2 7l5-4v8zM26 7l-5-4v8z"/><use href="#bulb" class="yf" x="20" y="15" width="12" height="17"/></svg></button>
          <button aria-label="Show or hide constraints"><svg viewBox="0 0 32 32"><path class="w" d="M6 1H1v26h5M22 1h5v10"/><path class="l" d="M12 18l10-11"/><path stroke="#d9706c" stroke-width="3" d="M7 12l10 10"/><use href="#bulb" class="cf" x="20" y="15" width="12" height="17"/><path class="yf" d="M26 15a6 6 0 0 0 0 13z"/></svg></button>
          <button aria-label="Hide constraints"><svg viewBox="0 0 32 32"><path class="w" d="M6 1H1v26h5M22 1h5v10"/><path class="l" d="M12 18l10-11"/><path stroke="#d9706c" stroke-width="3" d="M7 12l10 10"/><use href="#bulb" class="cf" x="20" y="15" width="12" height="17"/></svg></button>
          <button aria-label="Toggle dynamic"><svg viewBox="0 0 32 32"><path class="l" d="M1 0v32M27 0v12M5 7h18"/><path class="lf" d="M2 7l5-4v8zM26 7l-5-4v8z"/><use href="#bulb" class="cf" x="20" y="15" width="12" height="17"/><path class="yf" d="M26 15a6 6 0 0 0 0 13z"/></svg></button>
          <button aria-label="Hide dynamic"><svg viewBox="0 0 32 32"><path class="l" d="M1 0v32M27 0v12M5 7h18"/><path class="lf" d="M2 7l5-4v8zM26 7l-5-4v8z"/><use href="#bulb" class="cf" x="20" y="15" width="12" height="17"/></svg></button>
        </div>
      </section>

      <footer>
        <button aria-label="Add set"><svg width="22" height="22" viewBox="0 0 22 22"><path class="l" d="M11 0v22M0 11h22"/></svg></button>
        <button aria-label="Manage sets"><svg width="26" height="22" viewBox="0 0 26 22"><path class="l" d="M5 1h21M5 8h21M5 20h21"/><path class="lf" d="M0 12h18v4H0zM20 15l3-3 3 3z"/></svg></button>
      </footer>
    </aside>

    <div class="main">
      <div class="upper">
        <section class="editor">
          <nav class="filetabs">
            <button class="icon" aria-label="Start"><svg width="28" height="28" viewBox="0 0 28 28"><path class="bf" d="M0 0h14v14H0z"/><path class="lf" d="M17 2h11v12H17zM2 17h12v11H2zM16 17h12v11H16z"/></svg></button>
            <button class="icon" aria-label="New drawing"><svg width="22" height="22" viewBox="0 0 22 22"><path class="l" d="M11 0v22M0 11h22"/></svg></button>
            <button class="file">malevich...lhaaula*</button>
          </nav>
          <div class="canvas">
            <div class="viewlabel"><button>+</button><i></i><button>Top</button><i></i><button>2D Wireframe</button></div>

            <svg class="drawing" width="1017" height="1016" viewBox="0 0 1017 1016" aria-label="Drawing grid">
              <g id="grid"></g>
              <path class="ucs" d="M2 912v100h101M-6 1002h18v18h-18z"/>
              <text class="axis" x="18" y="902" text-anchor="middle">Y</text>
              <text class="axis" x="124" y="1008" text-anchor="middle">X</text>
            </svg>

            <svg class="cube" width="340" height="400" viewBox="0 0 1020 1200" aria-label="View cube">
              <path fill="#c4c5c9" d="M120 80l46 46h-10v40H82v-40H74z"/><path fill="#333a42" d="M111 130h18v36h-18z"/>
              <circle cx="500" cy="522" r="324" fill="none" stroke="#54585d" stroke-width="94"/><circle cx="500" cy="522" r="324" fill="none" stroke="#83868b" stroke-width="84"/>
              <g fill="#bdbec3"><path d="M735 96l34-35v18c40-1 75 10 107 37l-22 22c-28-20-50-28-83-27v20z"/><path d="M910 146c26 33 36 67 35 110h19l-34 33-38-33h20c2-30-5-54-25-84z"/><path d="M866 878h66v14h-66zM866 900h64l-32 32z"/></g>
              <g fill="#e4e4e4"><path d="M464 290h74l-37 36zM464 758h74l-37-38zM265 486v72l38-36zM734 486v72l-38-36z"/></g>
              <path class="face" d="M344 370h312v310H344z"/><path fill="#bcc3cf" d="M405 426h192v192H405z"/>
              <g class="nesw"><text x="502" y="241">N</text><text x="160" y="570">W</text><text x="840" y="574">E</text><text x="501" y="915">S</text></g>
              <text class="top-label" x="502" y="550">TOP</text>
              <path fill="none" stroke="#e8284a" stroke-width="4" d="M294 367h436M512 150v198M512 386v200M494 349h36v36h-36z"/>
              <rect x="348" y="1059" width="303" height="72" rx="22" fill="#aebfbf"/>
              <text class="wcs" x="373" y="1118">WCS</text><path fill="#d8f2f2" stroke="#28303a" stroke-width="4" d="M569 1081h50l-25 28z"/>
            </svg>

            <section class="command">
              <div class="history">
                <p>Command: *Cancel*</p><p>Command: *Cancel*</p><p>Command: _vscurrent</p>
                <p>Enter an option [2dwireframe/Wireframe/Hidden/Realistic/Conceptual/Shaded/shaded with</p>
                <p>Edges/shades of Gray/SKetchy/X-ray/Other] &lt;X-Ray&gt;: _2d Regenerating model.</p>
                <p>Command:&nbsp; Regenerating model.</p>
                <i class="scroll"></i>
              </div>
              <div class="prompt">
                <button class="recent" aria-label="Recent commands">&gt;_<i class="caret"></i></button>
                <input type="text" placeholder="Type a command" aria-label="Command">
                <i class="caret"></i>
                <button aria-label="Undock"><svg width="26" height="28" viewBox="0 0 26 28"><path class="l" d="M10 9H1v17h24V9h-8M7 9v17"/><path class="b" d="M13 5v13"/><path class="bf" d="M13 0l5 7H8z"/></svg></button>
              </div>
            </section>
          </div>
        </section>

        <aside class="props">
          <nav class="tabs">
            <button class="active" aria-label="Properties"><svg width="34" height="30" viewBox="0 0 34 30"><use href="#stack" class="lf" width="28" height="24"/><circle class="out lf" cx="25" cy="22" r="7"/><path stroke="#3c4452" stroke-width="2" d="M25 17v2M25 21v6"/></svg></button>
            <button aria-label="References"><svg width="32" height="30" viewBox="0 0 32 30"><path class="lf" d="M1 20h11V6h11v7h8v16H1z"/><path class="wf" d="M25 6l6 5h-6z"/><path class="l" d="M9 6a2 2 0 0 0-4 0v5a3 3 0 0 0 6 0V5a5 5 0 0 0-9 0v9q0 3 4 3"/></svg></button>
            <button aria-label="Tool palettes" class="new"><svg width="28" height="28" viewBox="0 0 28 28"><path class="lf" d="M0 1h28v26H0z"/><path fill="#a8a8ae" d="M0 1h28v5H0z"/><path fill="#2f323e" d="M4 9h5v5H4zM4 16h5v5H4z"/><path fill="#74767e" d="M11 9h5v5h-5zM18 9h5v5h-5zM11 16h5v5h-5zM18 16h5v5h-5z"/></svg></button>
            <span></span>
            <button class="fold">»</button>
          </nav>
          <div class="props-head">
            <h2>Properties</h2>
            <div class="seg"><button class="on">All</button><button>My</button></div>
            <button class="ico edit" aria-label="Edit list"><svg width="28" height="28" viewBox="0 0 28 28"><path fill="none" stroke="#7d838e" stroke-width="2" d="M11 23H1V1h18v11M4 7h12M4 12h10M4 17h8"/><path fill="#7d838e" d="M12 27l2-7 10-9 4 5-10 9z"/></svg></button>
            <button class="ico" aria-label="Collapse"><svg width="24" height="28" viewBox="0 0 24 28"><path class="w" d="M9 9V1h13v26H9v-8M3 14h9"/><path class="wf" d="M0 14l6-4v8z"/></svg></button>
          </div>
          <div class="combo off wide"><select disabled aria-label="Object"><option>Model Space</option></select></div>

          <form class="fields">
            <h3>General</h3>
            <div class="row"><label for="f1">Color</label><div class="combo swatch"><select id="f1"><option>Yellow</option></select></div></div>
            <div class="row"><label for="f2">Layer</label><div class="combo"><select id="f2"><option>0</option></select></div></div>
            <div class="row"><label for="f3">Linetype</label><div class="combo linetype"><select id="f3"><option>ByL...</option></select></div></div>
            <div class="row"><label for="f4">Linetype scale</label><input id="f4" type="text" value="1.0000"></div>
            <div class="row"><label for="f5">Lineweight</label><div class="combo"><select id="f5"><option>ByLayer</option></select></div></div>
            <div class="row"><label for="f6">Transparency</label><div class="pair"><input id="f6" class="num" type="text" value="0"><button type="button" class="bylayer" aria-label="Transparency source"><svg width="26" height="22"><use href="#stack" class="bf"/></svg><i class="caret"></i></button></div></div>
            <h3>Annotation</h3>
            <div class="row"><label for="f7">Text style</label><div class="combo"><select id="f7"><option>Standard</option></select></div></div>
            <div class="row"><label for="f8">Dimension style</label><div class="combo"><select id="f8"><option>Standard</option></select></div></div>
            <div class="row"><label for="f9">Detail View style</label><div class="combo"><select id="f9"><option>Imperial24</option></select></div></div>
            <div class="row"><label for="f10">Multileader style</label><div class="combo"><select id="f10"><option>Standard</option></select></div></div>
            <div class="row"><label for="f11">Section View st...</label><div class="combo"><select id="f11"><option>Imperial24</option></select></div></div>
            <div class="row"><label for="f12">Table style</label><div class="combo"><select id="f12"><option>Standard</option></select></div></div>
            <div class="row"><label for="f13">Annotation scale</label><div class="combo"><select id="f13"><option>1:1</option></select></div></div>
            <div class="row"><label for="f14">Text height</label><div class="pair"><input id="f14" type="text" value="0.2000"><button type="button" class="pick" aria-label="Pick height"><svg width="32" height="32" viewBox="0 0 32 32"><path class="l" d="M1 0v28M31 0v12"/><path class="b" d="M6 6h20"/><path class="bf" d="M2 6l6-4v8zM30 6l-6-4v8z"/><path class="l" d="M24 13v19M15 22h17M20 18h8v8h-8z"/></svg></button></div></div>
            <h3>Plot Style</h3>
            <div class="row"><label for="f15">Plot style</label><div class="combo"><select id="f15"><option>ByColor</option></select></div></div>
            <div class="row"><label for="f16">Plot style table</label><div class="combo"><select id="f16"><option>None</option></select></div></div>
            <div class="row"><label for="f17" class="cut">Plot style attach...</label><input id="f17" type="text" value="Model" disabled></div>
            <div class="row"><label for="f18">Plot table type</label><input id="f18" type="text" value="Not available" disabled></div>
            <h3>UCS</h3>
            <div class="row"><label for="f19">UCS Name</label><input id="f19" type="text" disabled></div>
            <div class="row"><span></span><label class="check"><input type="checkbox" checked>UCS per view...</label></div>
            <h3>3D Visualization</h3>
            <div class="row"><label for="f20">Material</label><div class="combo"><select id="f20"><option>ByLayer</option></select></div></div>
            <div class="row"><label for="f21">Shadow Display</label><div class="combo"><select id="f21"><option>Casts and Re...</option></select></div></div>
            <h3>Visual Style</h3>
            <div class="row"><label for="f22">Visual style</label><div class="combo"><select id="f22"><option>2D Wireframe</option></select></div></div>
          </form>
        </aside>
      </div>

      <footer class="statusbar">
        <nav class="layouts"><button class="active">Model</button><button class="add" aria-label="New layout"><svg width="22" height="22" viewBox="0 0 22 22"><path class="l" d="M11 0v22M0 11h22"/></svg></button><button>Layout1</button><button>Layout2</button></nav>
        <div class="status">
          <output>26.6677, 22.7394, 0.0000</output>
          <button aria-label="Grid"><svg viewBox="0 0 32 32"><path class="l" d="M8 1v30M16 1v30M24 1v30M1 8h30M1 16h30M1 24h30"/></svg></button>
          <button aria-label="Snap"><svg viewBox="0 0 32 32"><path class="lf" d="M4 4h4v4H4zM14 4h4v4h-4zM24 4h4v4h-4zM4 14h4v4H4zM14 14h4v4h-4zM24 14h4v4h-4zM4 24h4v4H4zM14 24h4v4h-4zM24 24h4v4h-4z"/></svg></button>
          <button aria-label="Ortho"><svg viewBox="0 0 32 32"><path class="l" d="M2 2v28h28M2 18h12v12"/></svg></button>
          <button aria-label="Polar"><svg viewBox="0 0 32 32"><path class="l" d="M21 8a12 12 0 1 0 4 8M12 17h20M12 17L28 2"/></svg></button>
          <button class="on" aria-label="Dynamic input"><svg viewBox="0 0 32 32"><path class="w" d="M8 1v14M1 8h14"/><path class="wf" d="M12 18h20v9H12z"/></svg></button>
          <button aria-label="Lineweight"><svg viewBox="0 0 32 32"><path class="l" d="M0 5h32M12 13h20M12 22h20"/><path class="lf" d="M0 4h14v3H0zM0 11h14v5H0zM0 20h14v7H0z"/></svg></button>
          <button class="on" aria-label="Transparency"><svg viewBox="0 0 32 32"><path class="w" d="M3 3h26v26H3z"/><path stroke="#fff" stroke-width="3" stroke-dasharray="3 3" d="M7 8h18M7 14h18M7 20h18M10 11h15M10 17h15M10 23h15"/></svg></button>
          <button class="on" aria-label="Selection cycling"><svg viewBox="0 0 32 32"><path class="w" d="M7 2H2v26h5M17 2h5v14M8 6h8v5H8z"/><circle class="w" cx="12" cy="19" r="4"/><path class="wf" d="M19 15l12 11-6 1 3 5-3 1-3-5-3 3z"/></svg></button>
          <button class="on" aria-label="Object snap tracking"><svg viewBox="0 0 32 32"><path class="w" d="M27 4L2 27h30"/><path class="wf" d="M13 13h5v5h-5z"/></svg></button>
          <button aria-label="Object snap"><svg viewBox="0 0 32 32"><path class="l" d="M14 6h17v24H5V14"/><path fill="none" stroke="#efab84" stroke-width="2" d="M1 3h8v7H1z"/></svg></button>
          <button class="on" aria-label="Annotation visibility"><svg class="white" viewBox="0 0 32 32"><use href="#compass" x="-2" width="32" height="32"/><ellipse class="wf" cx="26" cy="7" rx="6" ry="6"/></svg></button>
          <button aria-label="Auto annotation"><svg viewBox="0 0 32 32"><use href="#compass" x="-2" width="32" height="32"/><use href="#bolt" x="18" y="0" width="15" height="15"/></svg></button>
          <button aria-label="Annotation scale"><svg viewBox="0 0 32 32"><use href="#compass" width="32" height="32"/></svg></button>
          <button class="scale">1:1<i class="caret"></i></button>
          <button aria-label="Isolate"><svg viewBox="0 0 32 32"><path class="l" d="M1 2h12v12H1zM14 21l6 10H8z"/><circle class="l" cx="25" cy="13" r="6"/></svg></button>
          <button aria-label="Customization"><svg viewBox="0 0 32 32"><use href="#gear" width="32" height="32"/></svg></button>
        </div>
      </footer>
    </div>
  </div>
</main>

<div class="desktop"><span class="sel">xto IA<span class="comma">,</span> Fluidez.lsp</span><span class="name">K. Malevich</span></div>

<script src="drawing.js"></script>
</body>
</html>
```

FILE: styles.css
```css
:root {
  --panel: #3c4452;
  --line: #222930;
  --field: #505b6d;
  --light: #dcdcdc;
  --blue: #7fc0f8;
  --ui: Inter, "Liberation Sans", sans-serif;
}
* { box-sizing: border-box; }
body {
  margin: 0; height: 100vh; display: flex; flex-direction: column; overflow: hidden;
  font: 22px/28px var(--ui); color: var(--light);
  background: linear-gradient(90deg, #12357e 0 1401px, #5b5b5b 1401px 1988px, #2b2710 1988px) bottom / 100% 60px no-repeat #d9d6cc;
}
button, input, select { font: inherit; color: inherit; background: none; border: 0; padding: 0; margin: 0; }
h1, h2, h3, p { margin: 0; font-size: inherit; font-weight: inherit; }
svg { display: block; flex: none; overflow: visible; }
.defs { width: 0; height: 0; position: absolute; }

/* icon paints */
.l, .b, .w, .m, .d, .gr { fill: none; stroke-width: 2; }
.l { stroke: var(--light); } .b { stroke: var(--blue); } .w { stroke: #fff; }
.m { stroke: #9a9a9a; } .d { stroke: #55585f; } .gr { stroke: #7bd88a; }
.g { fill: #6d717c; } .thin { stroke-width: 1; }
.lf { fill: var(--light); } .bf { fill: #93c8f8; } .wf { fill: #f6f6f6; }
.yf { fill: #fbd485; } .rf { fill: #f0716a; } .tf { fill: #d4ac78; }
.cf { fill: #8ad9e4; } .pf { fill: var(--panel); } .grf { fill: #8ad6a0; }
.out { stroke: var(--panel); stroke-width: 2; paint-order: stroke; }
.pbg { fill: var(--panel); }
.caret { border: 6px solid transparent; border-top: 8px solid #cfd1d4; border-bottom: 0; }

/* system menu bar */
.menubar {
  flex: none; height: 50px; padding: 0 38px 2px 42px; display: flex; align-items: center;
  background: linear-gradient(90deg, #f1efe9, #e2dfd5); border-bottom: 2px solid #a3a4a3;
  color: #111; font-size: 25px;
}
.menus { display: flex; gap: 43px; margin-left: 40px; }
.menus .app { font-weight: 700; font-size: 26px; }
.tray { margin-left: auto; display: flex; align-items: center; gap: 38px; }
.tray time { margin-left: -4px; font-size: 26px; }

/* application window */
.window {
  flex: 1; min-height: 0; display: flex; flex-direction: column; overflow: hidden;
  background: var(--panel); border-radius: 20px; border-bottom: 1px solid #5a616c;
}
.titlebar { flex: none; border-bottom: 2px solid var(--line); }
.title-row { height: 52px; display: grid; grid-template-columns: 1fr auto 1fr; align-items: center; }
.lights { display: flex; gap: 16px; padding: 4px 0 0 16px; }
.lights i { width: 24px; height: 24px; border-radius: 50%; }
.close { background: radial-gradient(circle, #6e0f0a 0 4px, #ed6a5e 5px); }
.mini { background: #f5bf4f; }
.zoom { background: #61c554; }
h1 { display: flex; align-items: center; font-size: 26px; font-weight: 700; color: #a6abb2; }
h1 svg { margin-right: 12px; }
h1 span + span { margin-left: 28px; }
.user {
  justify-self: end; align-self: start; height: 43px; padding: 0 10px 2px 12px; display: flex; align-items: center; gap: 12px;
  background: var(--field); border: solid var(--line); border-width: 0 0 2px 2px; font-size: 24px; color: #eee;
}
.user .caret { margin-left: 6px; }
.toolbar { height: 60px; padding: 0 0 6px 395px; display: flex; align-items: center; gap: 62px; }
.group { display: flex; }
.group button { width: 66px; height: 44px; display: grid; place-items: center; position: relative; }
.group svg { width: 32px; height: 32px; }
.new { position: relative; }
.new::after {
  content: ""; position: absolute; top: 0; right: -1px; width: 20px; height: 20px;
  border-radius: 50%; background: #e8743f; border: 2px solid #fff;
}
.workspace { flex: 1; min-height: 0; display: flex; }

/* tool palette */
.palette { flex: none; width: 370px; display: flex; flex-direction: column; border-right: 2px solid var(--line); }
.tabs { flex: none; height: 44px; display: flex; }
.tabs > * { background: #30333f; border-right: 2px solid var(--line); box-shadow: 0 2px var(--line); display: grid; place-items: center; }
.tabs > .active { background: var(--panel); box-shadow: none; }
.tabs > .fold { background: var(--panel); width: 47px; flex: none; border: 0; color: #a0a4aa; font-size: 24px; font-weight: 300; }
.palette .tabs > * { flex: 1; color: #8d9097; }
.palette .tabs > .active { color: #fff; }
.palette .tabs > .fold { flex: none; }
.palette section { flex: none; margin: 0 8px; padding-bottom: 12px; border-bottom: 2px solid var(--line); }
.palette h2 { height: 42px; padding: 4px 3px 0 0; display: flex; align-items: center; font: 20px/24px "Liberation Sans", sans-serif; color: #f2f2f2; }
.palette h2 i { border: 8px solid transparent; border-top: 9px solid #f2f2f2; border-bottom: 0; margin: 0 10px 0 1px; }
.palette h2 svg { width: 18px; height: 18px; margin-left: auto; }
.tools { display: grid; grid-template-columns: repeat(8, 44px); grid-auto-rows: 44px; }
.tools button { position: relative; display: grid; place-items: center; }
.tools svg { width: 32px; height: 32px; }
.tools .big { grid-row: 1 / span 2; grid-column: span 2; }
.tools .mid { grid-column: 5 / span 2; }
.tools .big svg { width: 64px; height: 64px; }
.tools .low { top: 4px; }
.tools:has(.low) { padding-bottom: 4px; }
.tools .rowstart { grid-column: 5; }
.tools .fly::after { content: ""; position: absolute; right: 0; bottom: 0; border: 4px solid #9a9a9a; border-top-color: transparent; border-left-color: transparent; }
.tools .big.fly::after { right: 2px; bottom: 2px; }
.tools .new::after { top: 0; right: 0; }
.tools text { font-family: var(--ui); }
.palette footer { margin-top: auto; height: 44px; padding-left: 31px; display: flex; align-items: center; gap: 34px; }

/* drawing editor */
.main { flex: 1; min-width: 0; display: flex; flex-direction: column; }
.upper { flex: 1; min-height: 0; display: flex; }
.editor { flex: 1; min-width: 0; display: flex; flex-direction: column; border-right: 2px solid var(--line); }
.filetabs { flex: none; height: 46px; display: flex; border-bottom: 2px solid var(--line); }
.filetabs button { border-right: 2px solid var(--line); }
.filetabs .icon { width: 47px; display: grid; place-items: center; }
.filetabs .file { width: 257px; padding: 0 6px 4px; text-align: left; background: #4e5a6e; color: #f0f0f0; font-weight: 600; font-size: 21px; }
.canvas { flex: 1; min-height: 0; position: relative; display: grid; place-items: center; background: #222830; }
.viewlabel { position: absolute; left: 28px; top: 10px; display: flex; align-items: center; gap: 13px; color: #969ba0; font: 600 23px/30px "Noto Sans", sans-serif; }
.viewlabel i { width: 2px; height: 24px; background: #7d8288; }
.viewlabel button:first-child { margin-right: 9px; }
.ucs { fill: none; stroke: #e8e8e8; stroke-width: 2; }
.axis { font: 200 34px var(--ui); fill: #e8e8e8; }
.cube { position: absolute; top: -10px; right: -10px; }
.cube text { font-family: "Liberation Sans", sans-serif; }
.face { fill: #e3e3e3; filter: drop-shadow(0 0 16px #55555588); }
.nesw text { font-size: 144px; font-weight: 700; text-anchor: middle; fill: #d8d8d8; stroke: #33383e; stroke-width: 8; paint-order: stroke; }
.cube .top-label { font: 700 72px "Liberation Sans Narrow", Roboto, sans-serif; text-anchor: middle; fill: #454e58; }
.wcs { font-size: 63px; fill: #28303a; }
.command { position: absolute; bottom: 0; left: 50%; width: 1000px; margin-left: -500px; font: 20px/30px "Noto Sans", sans-serif; color: #b4b8bd; }
.history { position: relative; margin-left: 80px; padding: 5px 10px 0; height: 185px; background: var(--panel); white-space: nowrap; }
.scroll { position: absolute; right: 11px; bottom: 4px; width: 8px; height: 40px; border-radius: 4px; background: #999ca1; }
.prompt { height: 50px; display: flex; align-items: center; background: var(--panel); padding-right: 20px; }
.prompt input { flex: 1; font-style: italic; font-size: 23px; outline: 0; }
.prompt input::placeholder { color: #9a9fa6; opacity: 1; }
.prompt .caret { border-width: 8px 6px 0; border-top-color: #9a9fa6; margin-right: 24px; }
.prompt .recent { width: 90px; padding-left: 16px; display: flex; align-items: center; gap: 4px; font-size: 24px; }
.recent .caret { margin: 0; }

/* properties inspector */
.props { flex: none; width: 508px; display: flex; flex-direction: column; padding-bottom: 17px; }
.props .tabs > * { width: 105px; }
.props .tabs > span { flex: 1; width: auto; }
.props .tabs > .fold { width: 47px; }
.props .tabs .new::after { top: -3px; right: 24px; }
.props-head { flex: none; height: 36px; margin-bottom: 14px; padding: 0 18px 0 20px; display: flex; align-items: center; }
.props-head h2 { font-weight: 500; font-size: 23px; color: #f2f2f2; margin-right: auto; }
.seg { display: flex; height: 28px; border: 2px solid #2d333d; margin-right: 22px; }
.seg button { width: 57px; font-size: 17px; line-height: 22px; color: #7d828c; }
.seg .on { width: 61px; background: var(--field); color: #fff; font-weight: 500; }
.ico.edit { margin-right: 20px; }
.combo { position: relative; display: flex; border: 2px solid #2f3b3e; border-radius: 5px; background: var(--field); height: 36px; }
.combo select { appearance: none; flex: 1; min-width: 0; padding-left: 12px; color: #fff; font-weight: 500; font-size: 22px; opacity: 1; }
.combo::after { content: ""; position: absolute; right: 9px; top: 12px; border: 6px solid transparent; border-top: 8px solid #d0d2d5; border-bottom: 0; }
.combo.off { height: 42px; margin: 0 19px 0 20px; border-color: #3c454f; background: #434c5e; }
.combo.off select { color: #868c97; }
.combo.off::after { border-top-color: #7a808b; top: 15px; }
.swatch::before { content: ""; position: absolute; left: 15px; top: 7px; width: 18px; height: 18px; background: #fffa4f; border: 2px solid #000; }
.combo.swatch select { padding-left: 56px; }
.linetype::before { content: ""; position: absolute; left: 13px; top: 16px; width: 65px; height: 2px; background: #fff; }
.combo.linetype select { padding-left: 105px; }
.fields { flex: 1; min-height: 0; overflow: hidden; padding-top: 8px; }
.fields h3 { height: 62px; padding-left: 65px; display: flex; align-items: center; position: relative; font-weight: 700; color: #d6d8da; font-size: 23px; }
.fields h3::before { content: ""; position: absolute; left: 28px; top: 24px; width: 10px; height: 10px; border: solid #22272f; border-width: 0 2px 2px 0; transform: rotate(45deg); }
.row { height: 46px; display: grid; grid-template-columns: 270px 205px; column-gap: 7px; align-items: center; }
.row > label:first-child { text-align: right; padding-right: 12px; white-space: nowrap; color: #cfd2d5; }
.row > .cut:first-child { padding-right: 0; }
.row input[type=text] { width: 100%; min-width: 0; height: 36px; padding-left: 6px; font-weight: 500; color: #fff; background: var(--field); border: 2px solid #2f3b3e; border-radius: 4px; }
.row input:disabled { color: #868c97; background: #434c5e; border-color: #3c454f; }
.pair { display: flex; align-items: center; gap: 7px; }
.row .pair .num { text-align: right; padding-right: 5px; margin-left: 5px; height: 32px; border-left: 3px solid #5b93ea; background: linear-gradient(#99a, #99a) 48px 16px / 1px 12px no-repeat var(--field); }
.bylayer { flex: none; width: 78px; height: 36px; display: flex; align-items: center; gap: 16px; padding-left: 15px; background: var(--field); border: 2px solid #2f3b3e; border-radius: 4px; }
.pick { flex: none; width: 39px; height: 36px; display: grid; place-items: center; border: 2px solid #2f3b3e; }
.check { display: flex; align-items: center; gap: 9px; color: #fff; font-weight: 500; padding-left: 4px; white-space: nowrap; }
.check input { appearance: none; width: 27px; height: 27px; background: #8797b8; border: 2px solid #2d333d; border-radius: 4px; display: grid; place-items: center; }
.check input::after { content: ""; width: 6px; height: 12px; border: solid #22272f; border-width: 0 3px 3px 0; transform: rotate(45deg); margin-bottom: 4px; }

/* status bar */
.statusbar { flex: none; height: 47px; display: flex; border-top: 2px solid var(--line); }
.layouts { flex: 1; display: flex; border-right: 2px solid var(--line); font-size: 21px; color: #b4b8bd; }
.layouts button { width: 118px; padding-bottom: 4px; border-right: 2px solid var(--line); }
.layouts .active { width: 117px; background: #4e5a6e; color: #fff; font-weight: 600; }
.layouts .add { width: 49px; display: grid; place-items: center; }
.status { display: flex; align-items: center; padding-right: 6px; font-size: 21px; color: #b9bcc1; }
.status output { width: 302px; padding-left: 26px; }
.status button { width: 40px; height: 40px; margin: 0 2px; display: grid; place-items: center; }
.status button svg { width: 32px; height: 32px; }
.status .on { background: #6b90c2; }
.status .white { --light: #fff; }
.status .scale { width: 52px; display: flex; align-items: center; gap: 8px; margin: 0 6px 0 0; }

/* desktop behind the window */
.desktop { flex: none; height: 30px; overflow: hidden; white-space: nowrap; color: #000; font: 700 33px/27px "Liberation Serif", serif; }
.sel { display: inline-block; width: 277px; }
.comma { color: #cfd3dc; }
.name { display: inline-block; background: #5c6b8c; }
```

FILE: drawing.js
```js
// Outline colours of the 8 x 8 grid, one letter per segment.
const ink = {
  M: '#e236f0', P: '#e0389c', R: '#e83222', O: '#c8401c', D: '#c42a3c', G: '#6cf040',
  g: '#50b454', o: '#84b43c', C: '#62f4f4', T: '#5cd0d4', A: '#74f0cc', S: '#62b8f4',
  s: '#5484cc', B: '#1410f0', b: '#1440f0', I: '#3c18c8', V: '#a83ce8', Y: '#f8f048',
  y: '#c4c074', k: '#80504c', z: '#40407c', t: '#78b8b4'
};
const rows = ['MRGRCMGM', 'GPOPRBAY', 'GVRPDBSY', 'RRRMRCRR', 'DRRVOADR', 'GbbGOADV', 'GIbGRSkP', 'VIbgTDGA', 'MBBGCRGC'];
const cols = ['MGBRMGTM', 'PVbRPbSI', 'GRCRYBSB', 'oPtPygSg', 'TRBRgODA', 'CBBCGCRR', 'oSPkzkso', 'GYVRbMAA', 'MYTRTMYT'];
const xs = [2, 128, 254, 381, 508, 634, 760, 887, 1013];
const ys = [2, 128, 254, 380, 506, 634, 760, 886, 1012];
const grid = document.getElementById('grid');

function segment(x1, y1, x2, y2, key) {
  const line = document.createElementNS('http://www.w3.org/2000/svg', 'line');
  Object.entries({ x1, y1, x2, y2, stroke: ink[key], 'stroke-width': 2 })
    .forEach(([name, value]) => line.setAttribute(name, value));
  grid.append(line);
}

cols.forEach((colours, c) => [...colours].forEach((key, r) => segment(xs[c], ys[r], xs[c], ys[r + 1], key)));
rows.forEach((colours, r) => [...colours].forEach((key, c) => segment(xs[c], ys[r], xs[c + 1], ys[r], key)));
```
